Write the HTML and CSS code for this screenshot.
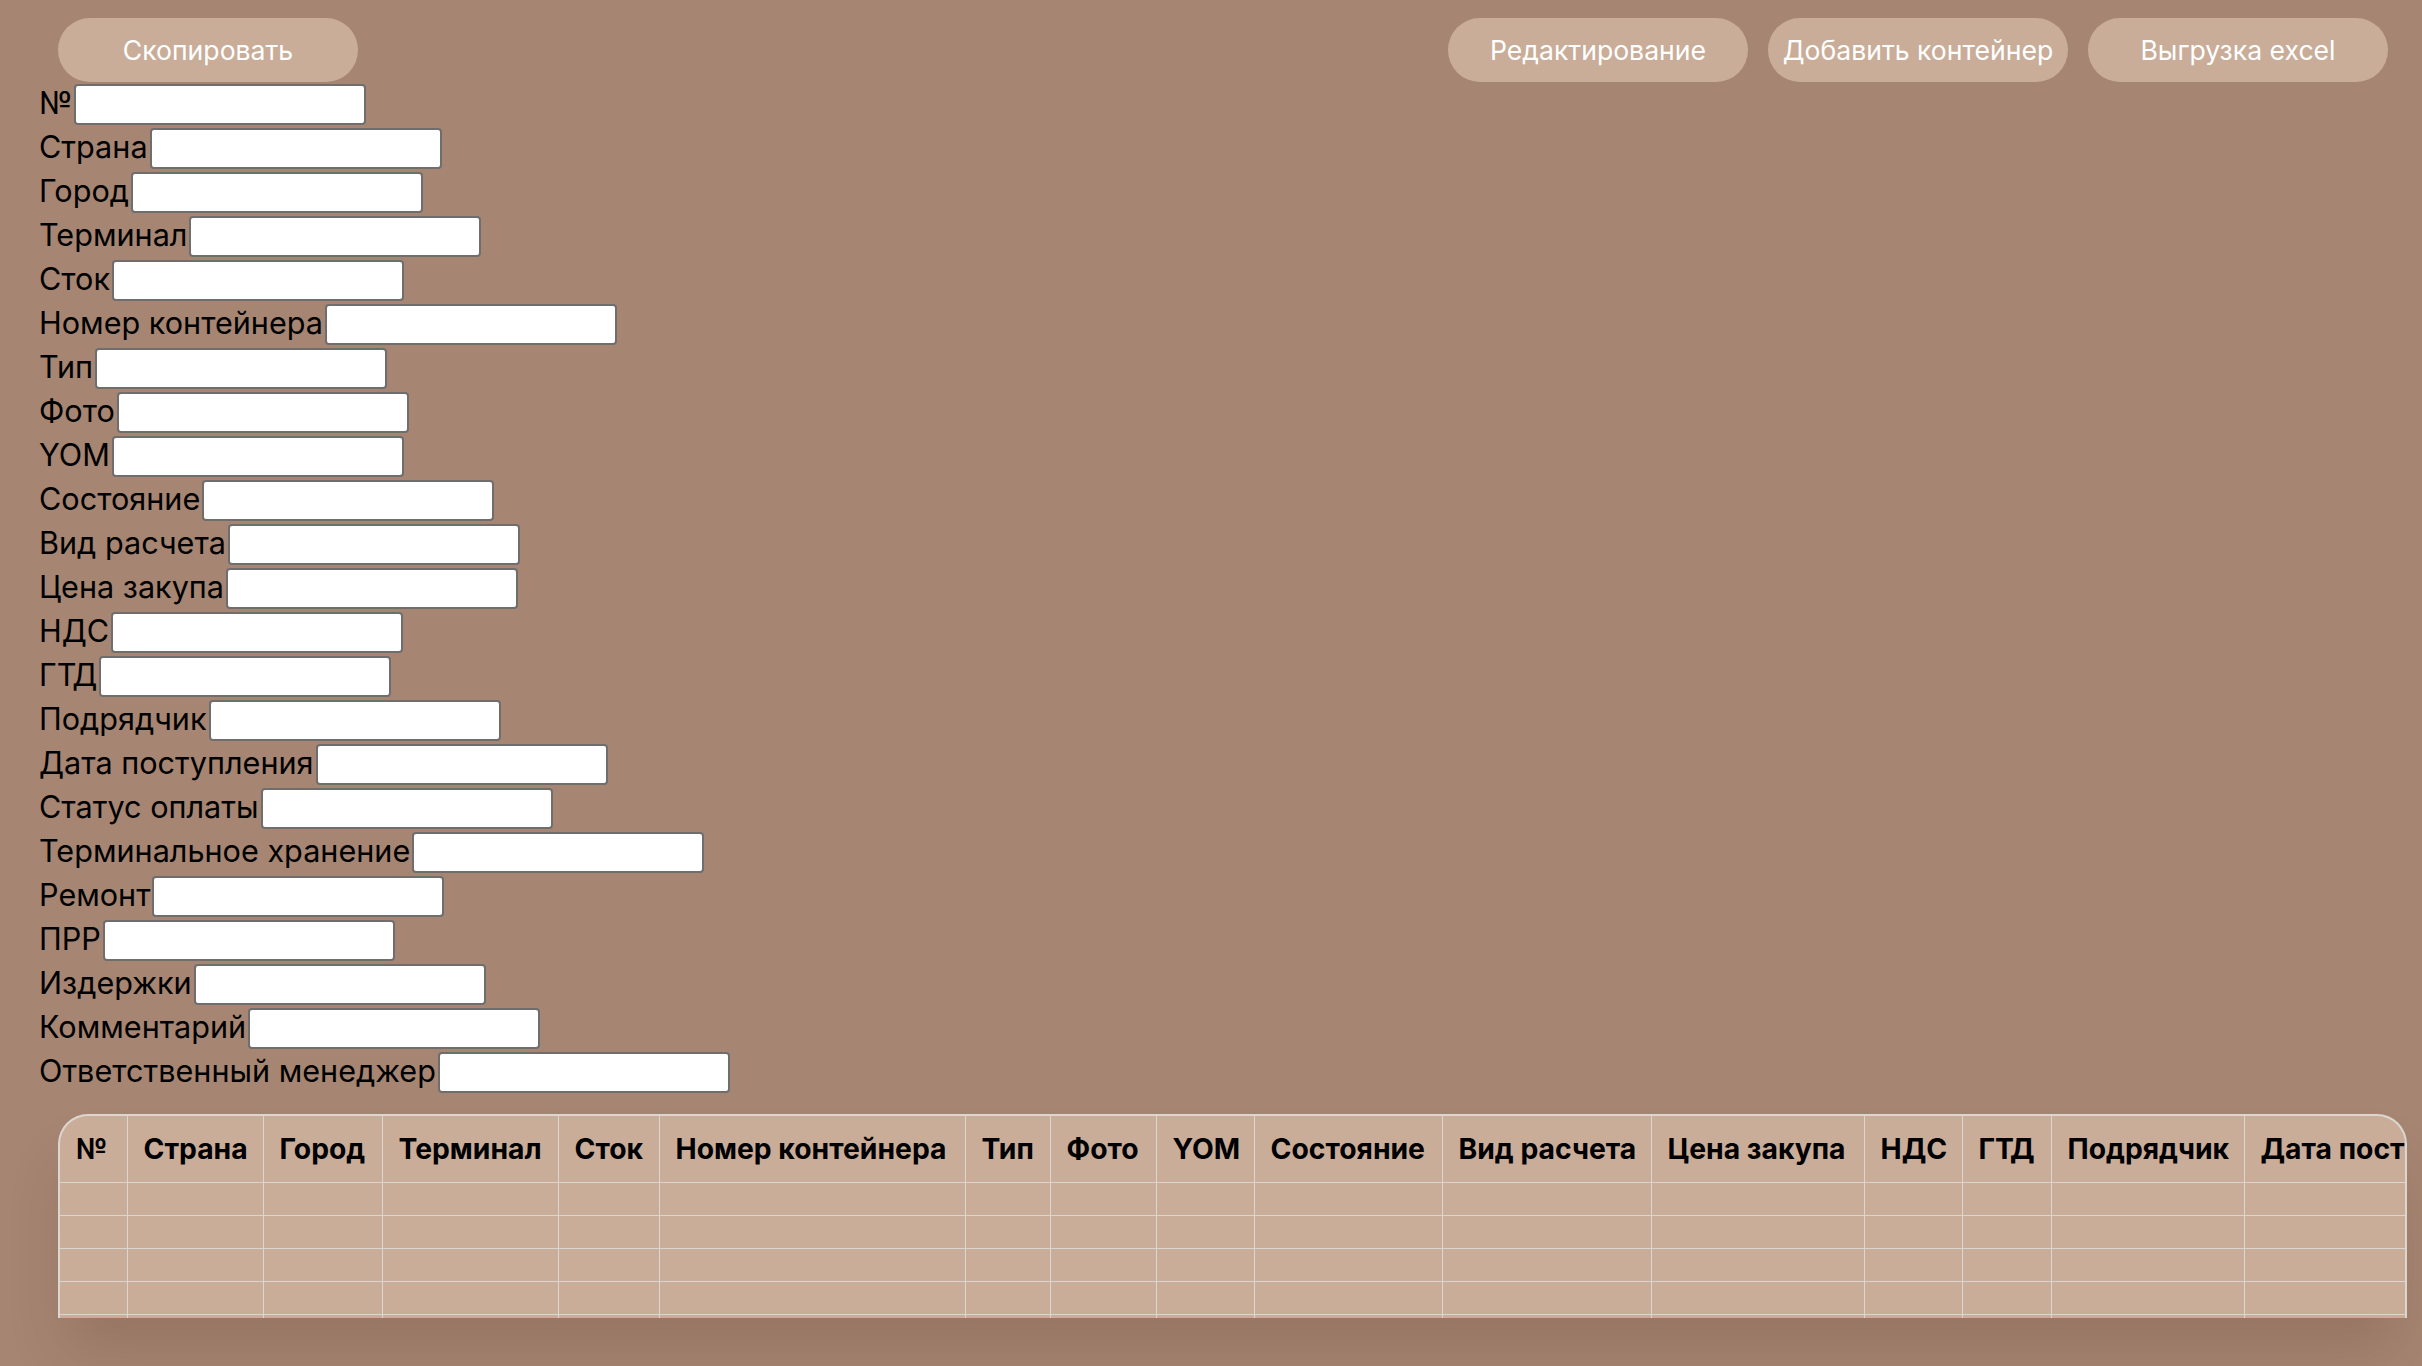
FILE: index.html
```html
<!DOCTYPE html>
<html lang="ru">
<head>
<meta charset="utf-8">
<title>Контейнеры</title>
<link rel="stylesheet" href="styles.css">
</head>
<body>
<div class="topbar">
  <button class="pill">Скопировать</button>
  <div class="actions">
    <button class="pill">Редактирование</button>
    <button class="pill">Добавить контейнер</button>
    <button class="pill">Выгрузка excel</button>
  </div>
</div>
<form class="fields">
  <div class="row"><label>№</label><input type="text"></div>
  <div class="row"><label>Страна</label><input type="text"></div>
  <div class="row"><label>Город</label><input type="text"></div>
  <div class="row"><label>Терминал</label><input type="text"></div>
  <div class="row"><label>Сток</label><input type="text"></div>
  <div class="row"><label>Номер контейнера</label><input type="text"></div>
  <div class="row"><label>Тип</label><input type="text"></div>
  <div class="row"><label>Фото</label><input type="text"></div>
  <div class="row"><label>YOM</label><input type="text"></div>
  <div class="row"><label>Состояние</label><input type="text"></div>
  <div class="row"><label>Вид расчета</label><input type="text"></div>
  <div class="row"><label>Цена закупа</label><input type="text"></div>
  <div class="row"><label>НДС</label><input type="text"></div>
  <div class="row"><label>ГТД</label><input type="text"></div>
  <div class="row"><label>Подрядчик</label><input type="text"></div>
  <div class="row"><label>Дата поступления</label><input type="text"></div>
  <div class="row"><label>Статус оплаты</label><input type="text"></div>
  <div class="row"><label>Терминальное хранение</label><input type="text"></div>
  <div class="row"><label>Ремонт</label><input type="text"></div>
  <div class="row"><label>ПРР</label><input type="text"></div>
  <div class="row"><label>Издержки</label><input type="text"></div>
  <div class="row"><label>Комментарий</label><input type="text"></div>
  <div class="row"><label>Ответственный менеджер</label><input type="text"></div>
</form>
<div class="table-wrap">
  <table class="grid">
    <thead>
      <tr>
        <th class="w-num">№</th>
        <th class="w-country">Страна</th>
        <th class="w-city">Город</th>
        <th class="w-term">Терминал</th>
        <th class="w-stock">Сток</th>
        <th class="w-cont">Номер контейнера</th>
        <th class="w-type">Тип</th>
        <th class="w-photo">Фото</th>
        <th class="w-yom">YOM</th>
        <th class="w-state">Состояние</th>
        <th class="w-calc">Вид расчета</th>
        <th class="w-price">Цена закупа</th>
        <th class="w-vat">НДС</th>
        <th class="w-gtd">ГТД</th>
        <th class="w-contr">Подрядчик</th>
        <th class="w-date">Дата поступления</th>
        <th class="w-pay">Статус оплаты</th>
        <th class="w-store">Терминальное хранение</th>
        <th class="w-repair">Ремонт</th>
        <th class="w-prr">ПРР</th>
        <th class="w-cost">Издержки</th>
        <th class="w-comm">Комментарий</th>
        <th class="w-mgr">Ответственный менеджер</th>
      </tr>
    </thead>
    <tbody>
      <tr><td></td><td></td><td></td><td></td><td></td><td></td><td></td><td></td><td></td><td></td><td></td><td></td><td></td><td></td><td></td><td></td><td></td><td></td><td></td><td></td><td></td><td></td><td></td></tr>
      <tr><td></td><td></td><td></td><td></td><td></td><td></td><td></td><td></td><td></td><td></td><td></td><td></td><td></td><td></td><td></td><td></td><td></td><td></td><td></td><td></td><td></td><td></td><td></td></tr>
      <tr><td></td><td></td><td></td><td></td><td></td><td></td><td></td><td></td><td></td><td></td><td></td><td></td><td></td><td></td><td></td><td></td><td></td><td></td><td></td><td></td><td></td><td></td><td></td></tr>
      <tr><td></td><td></td><td></td><td></td><td></td><td></td><td></td><td></td><td></td><td></td><td></td><td></td><td></td><td></td><td></td><td></td><td></td><td></td><td></td><td></td><td></td><td></td><td></td></tr>
      <tr><td></td><td></td><td></td><td></td><td></td><td></td><td></td><td></td><td></td><td></td><td></td><td></td><td></td><td></td><td></td><td></td><td></td><td></td><td></td><td></td><td></td><td></td><td></td></tr>
    </tbody>
  </table>
</div>
</body>
</html>
```
FILE: styles.css
```css
html, body {
  margin: 0;
  padding: 0;
}
body {
  background: #a68572;
  font-family: Inter, "Noto Sans", "Liberation Sans", sans-serif;
  color: #000;
  min-height: 1366px;
  overflow: hidden;
}
.topbar {
  display: flex;
  justify-content: space-between;
  align-items: flex-start;
  padding: 18px 34px 0 58px;
}
.actions {
  display: flex;
  gap: 20px;
}
.pill {
  width: 300px;
  height: 64px;
  border: none;
  border-radius: 32px;
  background: #c9ad99;
  color: #fff;
  font-family: Inter, "Noto Sans", "Liberation Sans", sans-serif;
  font-size: 26.6px;
  padding: 0;
  cursor: pointer;
}
.fields {
  margin: 0;
  padding: 0 0 0 39px;
  display: flex;
  flex-direction: column;
}
.row {
  height: 44px;
  display: flex;
  align-items: center;
  gap: 2px;
}
.row label {
  font-size: 30.6px;
  line-height: 40px;
  padding-bottom: 3px;
  white-space: nowrap;
}
.row input {
  box-sizing: border-box;
  width: 292px;
  height: 41px;
  margin: 0;
  border: 2px solid #6e6e6e;
  border-radius: 4px;
  background: #fff;
}
.table-wrap {
  margin: 20px 15px 0 58px;
  height: 204px;
  box-sizing: border-box;
  border: 2px solid #dcd6d1;
  border-bottom: none;
  border-radius: 30px 30px 0 0;
  background: #c9ad99;
  overflow: hidden;
  box-shadow: 0 40px 60px -10px rgba(70, 45, 30, 0.18);
}
.grid {
  border-collapse: collapse;
  table-layout: fixed;
  width: 4154px;
}
.grid th,
.grid td {
  box-sizing: border-box;
  border: 1px solid #dcd6d1;
  padding: 16px;
  text-align: left;
  white-space: nowrap;
  overflow: hidden;
}
.grid tr:first-child th {
  border-top: none;
}
.grid tr > :first-child {
  border-left: none;
}
.grid th {
  font-size: 28.3px;
  font-weight: 700;
  line-height: 34px;
}
.grid td {
  height: 33px;
}
.w-num { width: 67px; }
.w-country { width: 136px; }
.w-city { width: 119px; }
.w-term { width: 176px; }
.w-stock { width: 101px; }
.w-cont { width: 306px; }
.w-type { width: 85px; }
.w-photo { width: 106px; }
.w-yom { width: 98px; }
.w-state { width: 188px; }
.w-calc { width: 209px; }
.w-price { width: 213px; }
.w-vat { width: 98px; }
.w-gtd { width: 89px; }
.w-contr { width: 193px; }
.w-date { width: 300px; }
.w-pay { width: 260px; }
.w-store { width: 380px; }
.w-repair { width: 150px; }
.w-prr { width: 100px; }
.w-cost { width: 170px; }
.w-comm { width: 220px; }
.w-mgr { width: 390px; }
```
